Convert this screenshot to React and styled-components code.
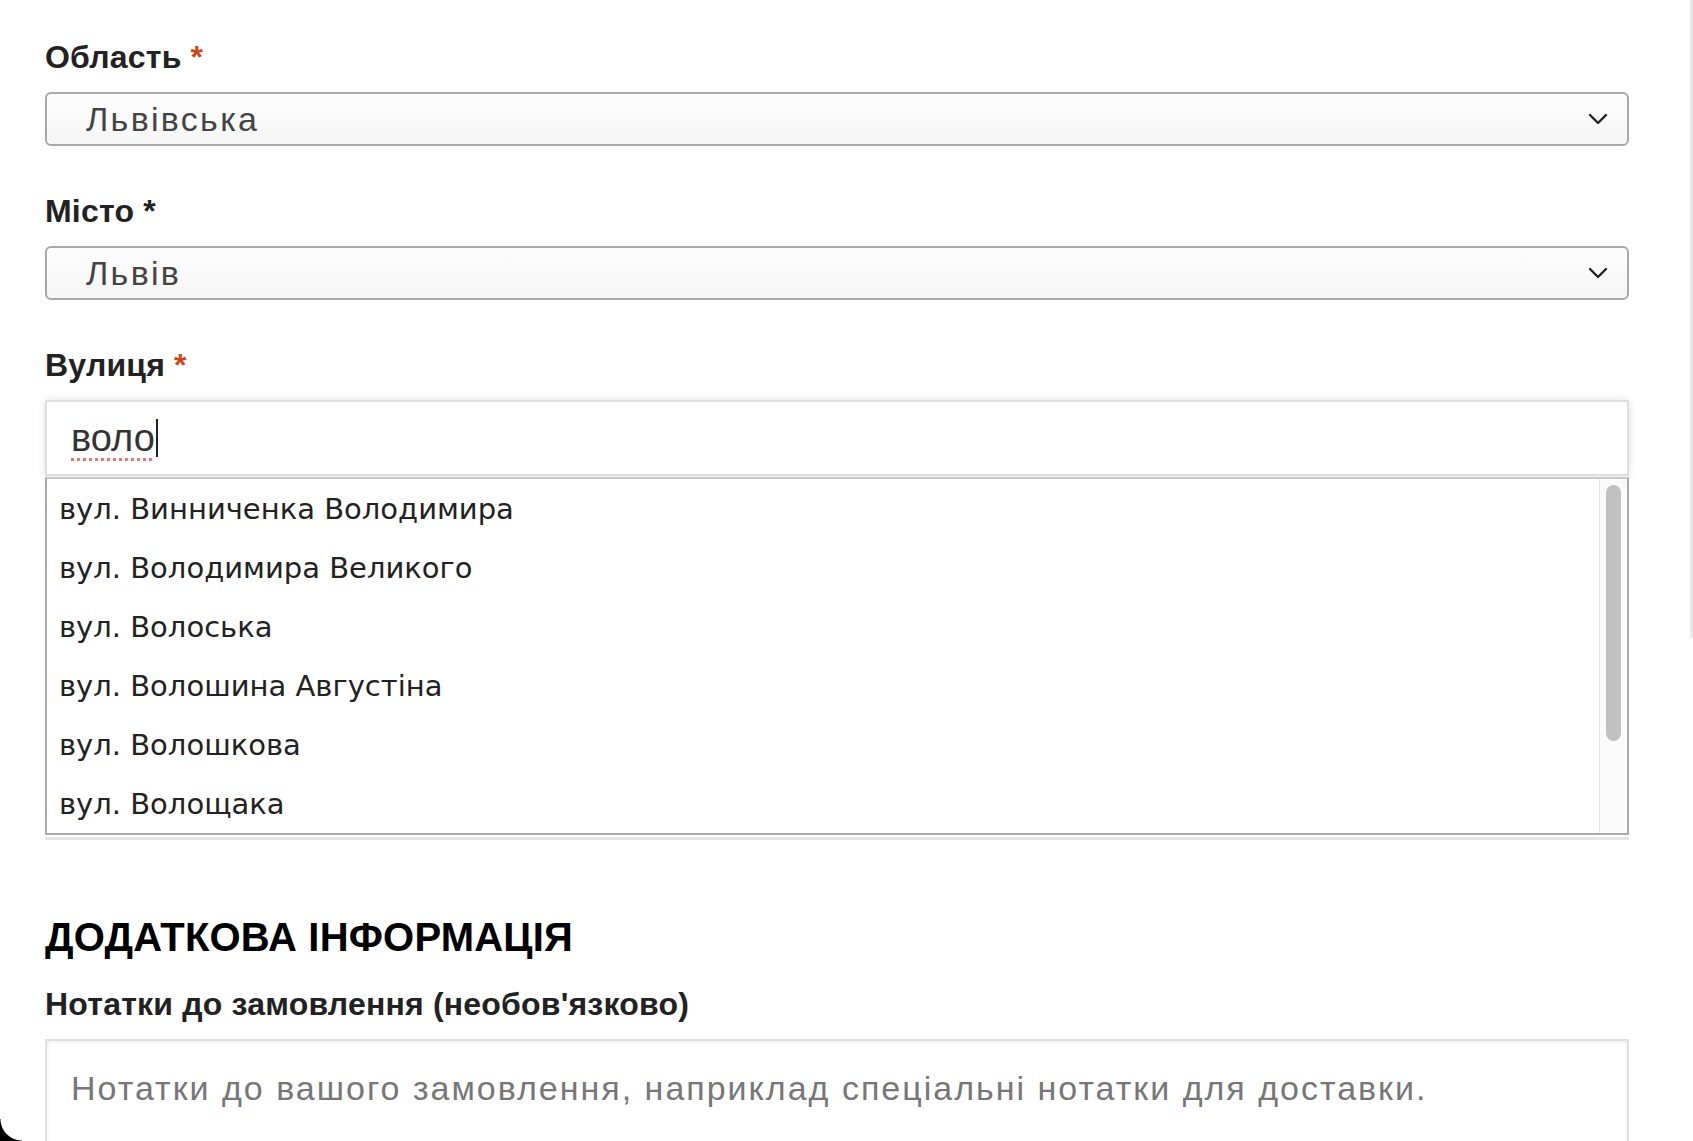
import styled, { createGlobalStyle } from "styled-components";

const GlobalStyle = createGlobalStyle`
  * {
    margin: 0;
    padding: 0;
    box-sizing: border-box;
  }

  html, body {
    height: 100%;
    overflow: hidden;
    background: #fff;
    font-family: "Liberation Sans", Arial, sans-serif;
  }
`;

const Page = styled.div`
  width: 1629px;
  padding: 38px 0 0 45px;
`;

const Field = styled.div`
  display: flex;
  flex-direction: column;
  margin-bottom: ${(p) => p.$gap || 0}px;
`;

const Label = styled.label`
  display: block;
  font-size: 32px;
  line-height: 38px;
  font-weight: 700;
  color: #222;
  letter-spacing: 0.2px;
  margin-bottom: 16px;
`;

const Star = styled.span`
  color: ${(p) => (p.$red ? "#d4441c" : "#222")};
  margin-left: 9px;
`;

const SelectBox = styled.div`
  height: 54px;
  display: flex;
  align-items: center;
  justify-content: space-between;
  padding: 0 19px 0 39px;
  border: 2px solid #a9a9a9;
  border-radius: 6px;
  background: linear-gradient(#fdfdfd, #f6f6f6);
  font-size: 34px;
  letter-spacing: 2.3px;
  color: #444;
`;

const Chevron = () => (
  <svg width="20" height="12" viewBox="0 0 20 12">
    <polyline
      points="2,2 10,10 18,2"
      fill="none"
      stroke="#222"
      strokeWidth="2.4"
      strokeLinecap="round"
      strokeLinejoin="round"
    />
  </svg>
);

const InputBox = styled.div`
  height: 76px;
  display: flex;
  align-items: center;
  padding-left: 24px;
  border: 2px solid #dedede;
  background: #fff;
  box-shadow: 0 0 8px rgba(0, 0, 0, 0.12);
  font-size: 38px;
  color: #333;
`;

const Typed = styled.span`
  text-decoration: underline dotted #f27474;
  text-decoration-thickness: 3px;
  text-underline-offset: 7px;
`;

const Caret = styled.span`
  display: inline-block;
  width: 2px;
  height: 38px;
  background: #222;
  margin-left: 1px;
`;

const ListWrap = styled.div`
  border-bottom: 3px solid #e6e6e6;
  padding-bottom: 2px;
`;

const List = styled.div`
  display: flex;
  border: 2px solid #ababab;
  border-top-color: #c8c8c8;
  background: #fff;
  margin-top: 1px;
`;

const Items = styled.ul`
  flex: 1;
  list-style: none;
`;

const Item = styled.li`
  height: 59px;
  display: flex;
  align-items: center;
  padding-left: 12px;
  font-family: "DejaVu Sans", Verdana, sans-serif;
  font-size: 29px;
  color: #222;
`;

const Track = styled.div`
  width: 28px;
  border-left: 1px solid #e4e4e4;
  background: #fafafa;
  padding: 6px 6px 0 6px;
`;

const Thumb = styled.div`
  height: 256px;
  border-radius: 8px;
  background: #c1c1c1;
`;

const Heading = styled.h3`
  font-size: 40px;
  line-height: 46px;
  font-weight: 700;
  color: #000;
  letter-spacing: 0.2px;
  margin: 74px 0 25px;
`;

const Notes = styled.textarea`
  width: 100%;
  height: 140px;
  resize: none;
  border: 2px solid #e0e0e0;
  box-shadow: inset 0 1px 4px rgba(0, 0, 0, 0.08);
  padding: 28px 24px;
  font-family: "Liberation Sans", Arial, sans-serif;
  font-size: 34px;
  letter-spacing: 2px;
  outline: none;

  &::placeholder {
    color: #777;
  }
`;

const PageScroll = styled.div`
  position: fixed;
  top: 0;
  right: 0;
  width: 3px;
  height: 638px;
  background: #e9e9e9;
`;

const Corner = styled.div`
  position: fixed;
  left: 0;
  bottom: 0;
  width: 22px;
  height: 22px;
  background: radial-gradient(circle at 22px 0, transparent 21px, #000 22px);
`;

const streets = [
  "вул. Винниченка Володимира",
  "вул. Володимира Великого",
  "вул. Волоська",
  "вул. Волошина Августіна",
  "вул. Волошкова",
  "вул. Волощака",
];

export default function App() {
  return (
    <>
      <GlobalStyle />
      <Page>
        <Field $gap={46}>
          <Label>
            Область<Star $red>*</Star>
          </Label>
          <SelectBox>
            <span>Львівська</span>
            <Chevron />
          </SelectBox>
        </Field>

        <Field $gap={46}>
          <Label>
            Місто<Star>*</Star>
          </Label>
          <SelectBox>
            <span>Львів</span>
            <Chevron />
          </SelectBox>
        </Field>

        <Field>
          <Label>
            Вулиця<Star $red>*</Star>
          </Label>
          <InputBox>
            <Typed>воло</Typed>
            <Caret />
          </InputBox>
          <ListWrap>
            <List>
              <Items>
                {streets.map((s) => (
                  <Item key={s}>{s}</Item>
                ))}
              </Items>
              <Track>
                <Thumb />
              </Track>
            </List>
          </ListWrap>
        </Field>

        <Heading>ДОДАТКОВА ІНФОРМАЦІЯ</Heading>
        <Label>Нотатки до замовлення (необов'язково)</Label>
        <Notes placeholder="Нотатки до вашого замовлення, наприклад спеціальні нотатки для доставки." />
      </Page>
      <PageScroll />
      <Corner />
    </>
  );
}
